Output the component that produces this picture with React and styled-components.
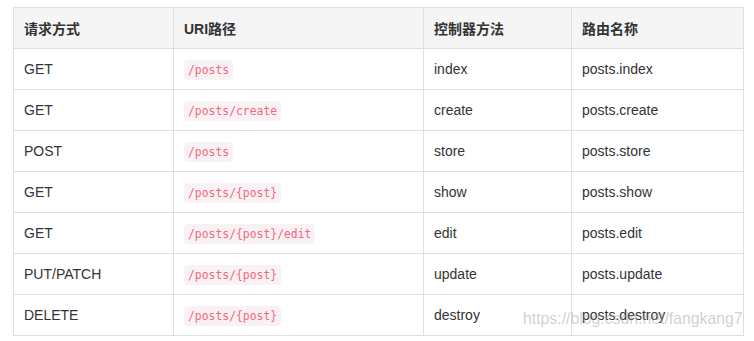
import React from "react";
import styled, { createGlobalStyle } from "styled-components";

const Global = createGlobalStyle`
  body { margin: 0; background: #fff; font-family: "Liberation Sans", Arial, "Noto Sans CJK SC", sans-serif; }
`;

const Page = styled.div`
  position: relative;
  padding: 7px 0 0 13px;
`;

const Table = styled.table`
  border-collapse: collapse;
  table-layout: fixed;
  width: 730px;
  font-size: 14px;
  color: #333;
`;

const Th = styled.th`
  background: #f5f5f5;
  border: 1px solid #dfdfdf;
  height: 41px;
  padding: 0 10px;
  text-align: left;
  font-weight: bold;
  font-family: "Liberation Sans", Arial, "Noto Sans CJK SC", sans-serif;
  box-sizing: border-box;
`;

const Td = styled.td`
  border: 1px solid #dfdfdf;
  height: 41px;
  padding: 0 10px;
  box-sizing: border-box;
  vertical-align: middle;
`;

const Code = styled.code`
  font-family: "DejaVu Sans Mono", "Liberation Mono", monospace;
  font-size: 11.4px;
  color: #f6657d;
  background: #f9f2f4;
  border-radius: 4px;
  padding: 3px 4px;
`;

const Watermark = styled.div`
  position: absolute;
  left: 523px;
  top: 310px;
  font-size: 15.8px;
  color: rgba(150, 150, 150, 0.45);
  font-family: "Liberation Sans", Arial, sans-serif;
  white-space: nowrap;
  pointer-events: none;
`;

const rows = [
  ["GET", "/posts", "index", "posts.index"],
  ["GET", "/posts/create", "create", "posts.create"],
  ["POST", "/posts", "store", "posts.store"],
  ["GET", "/posts/{post}", "show", "posts.show"],
  ["GET", "/posts/{post}/edit", "edit", "posts.edit"],
  ["PUT/PATCH", "/posts/{post}", "update", "posts.update"],
  ["DELETE", "/posts/{post}", "destroy", "posts.destroy"],
];

export default function App() {
  return (
    <Page>
      <Global />
      <Table>
        <colgroup>
          <col style={{ width: 160 }} />
          <col style={{ width: 250 }} />
          <col style={{ width: 148 }} />
          <col style={{ width: 172 }} />
        </colgroup>
        <thead>
          <tr>
            <Th>请求方式</Th>
            <Th>URI路径</Th>
            <Th>控制器方法</Th>
            <Th>路由名称</Th>
          </tr>
        </thead>
        <tbody>
          {rows.map((r, i) => (
            <tr key={i}>
              <Td>{r[0]}</Td>
              <Td><Code>{r[1]}</Code></Td>
              <Td>{r[2]}</Td>
              <Td>{r[3]}</Td>
            </tr>
          ))}
        </tbody>
      </Table>
      <Watermark>https://blog.csdn.net/fangkang7</Watermark>
    </Page>
  );
}
